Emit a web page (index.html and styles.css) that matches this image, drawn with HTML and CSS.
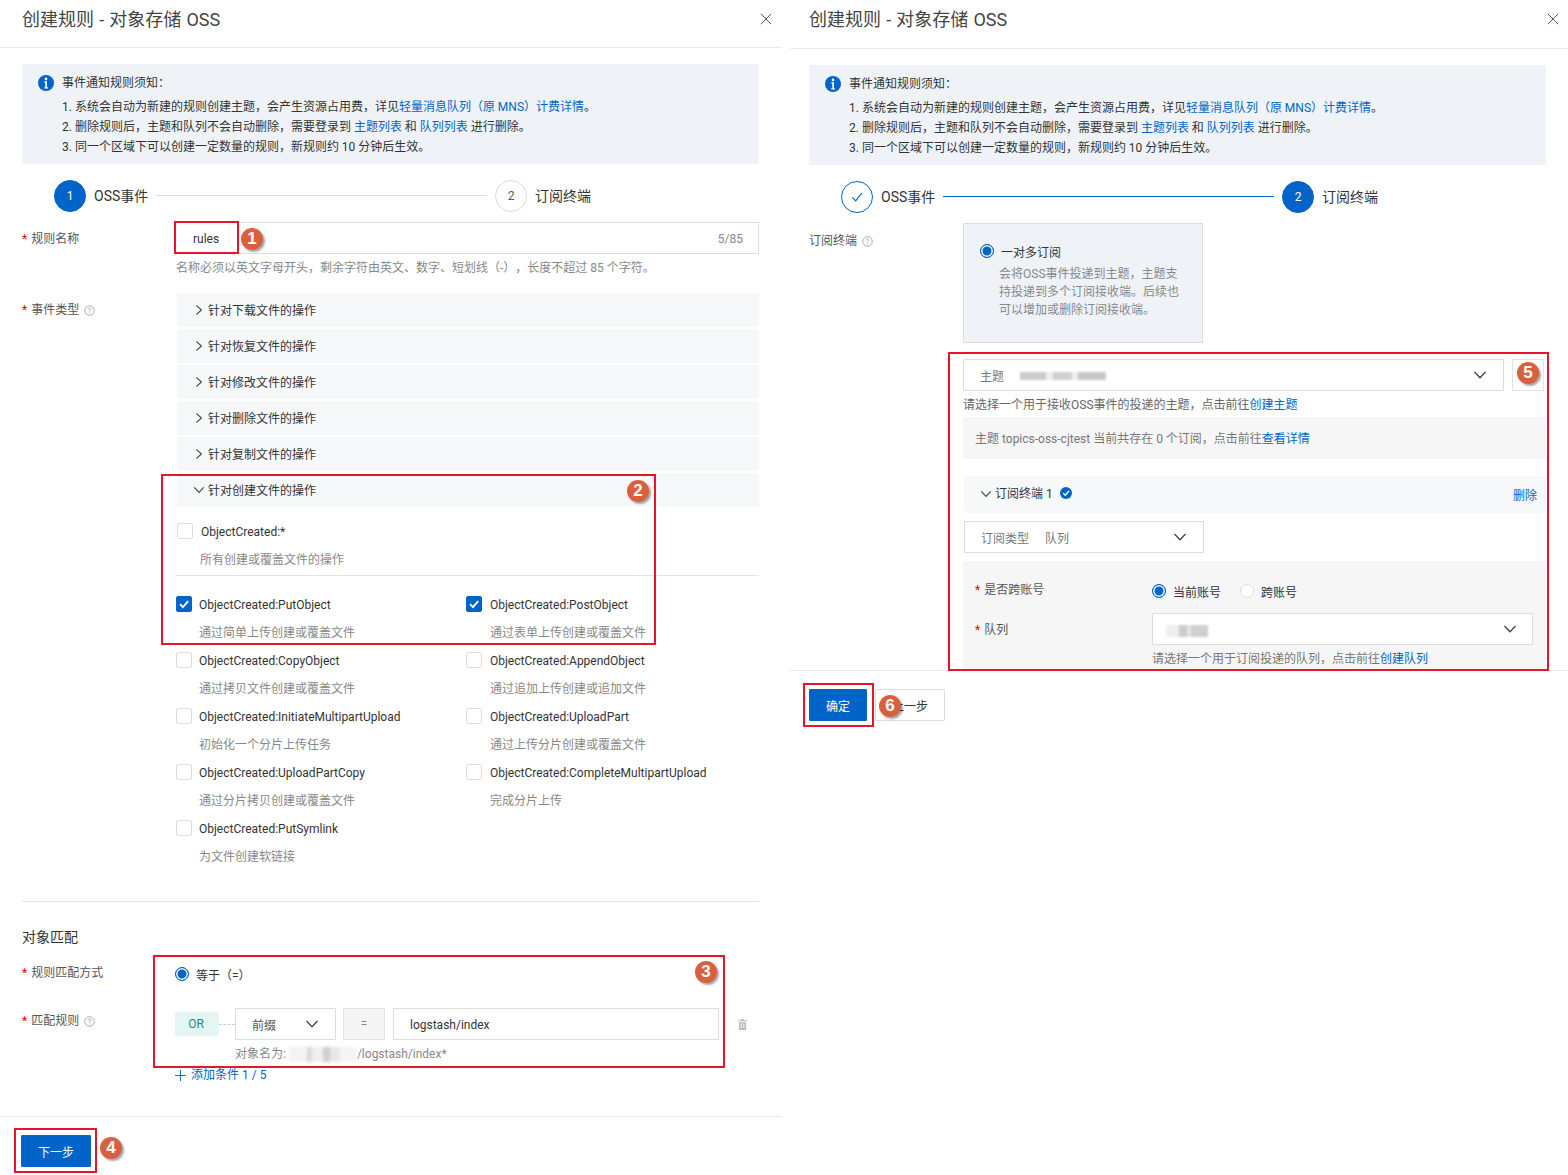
FILE: index.html
```html
<!DOCTYPE html>
<html lang="zh-CN">
<head>
<meta charset="utf-8">
<title>创建规则 - 对象存储 OSS</title>
<link rel="stylesheet" href="styles.css">
</head>
<body>
<svg class="sprite" aria-hidden="true">
  <symbol id="chev-down" viewBox="0 0 14 14"><path d="M1.500 4 7 9.800 12.500 4" fill="none" stroke="currentColor" stroke-width="1.300"/></symbol>
  <symbol id="chev-right" viewBox="0 0 14 14"><path d="M4 1.500 9.800 7 4 12.500" fill="none" stroke="currentColor" stroke-width="1.300"/></symbol>
  <symbol id="help" viewBox="0 0 12 12"><circle cx="6" cy="6" r="5.200" fill="none" stroke="currentColor" stroke-width=".9"/><path d="M4.500 4.800c0-2 3-2 3-.2 0 1.200-1.500 1.100-1.500 2.500M6 8.200v1" fill="none" stroke="currentColor" stroke-width=".9"/></symbol>
  <symbol id="info" viewBox="0 0 16 16"><circle cx="8" cy="8" r="8" fill="#0064c8"/><circle cx="8" cy="3.900" r="1.300" fill="#fff"/><path d="M6.300 6.300h2.700v6h1v1.200H6.300v-1.200h1V7.500h-1z" fill="#fff"/></symbol>
  <symbol id="close" viewBox="0 0 12 12"><path d="M.8.800l10.400 10.400M11.200.800.800 11.200" fill="none" stroke="currentColor" stroke-width="1"/></symbol>
  <symbol id="tick" viewBox="0 0 16 16"><path d="M3.500 8.200 6.800 11.500 12.800 4.800" fill="none" stroke="currentColor" stroke-width="2.100"/></symbol>
  <symbol id="thin-tick" viewBox="0 0 16 16"><path d="M2.500 8.500 6.500 12.500 13.500 3.500" fill="none" stroke="currentColor" stroke-width="1.300"/></symbol>
  <symbol id="trash" viewBox="0 0 10 12"><path d="M3.500 0h3v1.200H10v1.300H0V1.200h3.500zM1 3.500h8V12H1zM3 5v5h1V5zm3 0v5h1V5z" fill="currentColor"/></symbol>
  <symbol id="plus" viewBox="0 0 12 12"><path d="M6 0v12M0 6h12" fill="none" stroke="currentColor" stroke-width="1"/></symbol>
</svg>

<main class="page">
  <section class="panel panel-left">
    <header class="panel-head">
      <h1 class="panel-title">创建规则 - 对象存储 OSS</h1>
      <svg class="close-icon"><use href="#close"/></svg>
    </header>
    <div class="panel-body">
      <div class="notice">
        <div class="notice-title"><svg class="info-icon"><use href="#info"/></svg>事件通知规则须知：</div>
        <p>1. 系统会自动为新建的规则创建主题，会产生资源占用费，详见<a>轻量消息队列（原 MNS）计费详情</a>。</p>
        <p>2. 删除规则后，主题和队列不会自动删除，需要登录到 <a>主题列表</a> 和 <a>队列列表</a> 进行删除。</p>
        <p>3. 同一个区域下可以创建一定数量的规则，新规则约 10 分钟后生效。</p>
      </div>

      <div class="steps">
        <span class="step-dot step-dot-on">1</span><span class="step-name">OSS事件</span>
        <span class="step-line"></span>
        <span class="step-dot">2</span><span class="step-name">订阅终端</span>
      </div>

      <div class="form-row row-name">
        <label class="form-label"><i>*</i>规则名称</label>
        <div class="form-field">
          <div class="text-input name-input"><span class="input-value">rules</span><span class="counter">5/85</span></div>
          <div class="hint hint-name">名称必须以英文字母开头，剩余字符由英文、数字、短划线（-），长度不超过 85 个字符。</div>
        </div>
      </div>

      <div class="form-row row-events">
        <label class="form-label label-events"><i>*</i>事件类型 <svg class="help-icon"><use href="#help"/></svg></label>
        <div class="form-field">
          <div class="acc"><svg class="acc-icon"><use href="#chev-right"/></svg>针对下载文件的操作</div>
          <div class="acc"><svg class="acc-icon"><use href="#chev-right"/></svg>针对恢复文件的操作</div>
          <div class="acc"><svg class="acc-icon"><use href="#chev-right"/></svg>针对修改文件的操作</div>
          <div class="acc"><svg class="acc-icon"><use href="#chev-right"/></svg>针对删除文件的操作</div>
          <div class="acc"><svg class="acc-icon"><use href="#chev-right"/></svg>针对复制文件的操作</div>
          <div class="acc"><svg class="acc-icon"><use href="#chev-down"/></svg>针对创建文件的操作</div>
          <div class="check-item check-all">
            <div class="check-line"><span class="check"></span>ObjectCreated:*</div>
            <div class="check-desc">所有创建或覆盖文件的操作</div>
          </div>
          <div class="events-divider"></div>
          <div class="check-grid">
            <div class="check-item"><div class="check-line"><span class="check check-on"><svg><use href="#tick"/></svg></span>ObjectCreated:PutObject</div><div class="check-desc">通过简单上传创建或覆盖文件</div></div>
            <div class="check-item"><div class="check-line"><span class="check check-on"><svg><use href="#tick"/></svg></span>ObjectCreated:PostObject</div><div class="check-desc">通过表单上传创建或覆盖文件</div></div>
            <div class="check-item"><div class="check-line"><span class="check"></span>ObjectCreated:CopyObject</div><div class="check-desc">通过拷贝文件创建或覆盖文件</div></div>
            <div class="check-item"><div class="check-line"><span class="check"></span>ObjectCreated:AppendObject</div><div class="check-desc">通过追加上传创建或追加文件</div></div>
            <div class="check-item"><div class="check-line"><span class="check"></span>ObjectCreated:InitiateMultipartUpload</div><div class="check-desc">初始化一个分片上传任务</div></div>
            <div class="check-item"><div class="check-line"><span class="check"></span>ObjectCreated:UploadPart</div><div class="check-desc">通过上传分片创建或覆盖文件</div></div>
            <div class="check-item"><div class="check-line"><span class="check"></span>ObjectCreated:UploadPartCopy</div><div class="check-desc">通过分片拷贝创建或覆盖文件</div></div>
            <div class="check-item"><div class="check-line"><span class="check"></span>ObjectCreated:CompleteMultipartUpload</div><div class="check-desc">完成分片上传</div></div>
            <div class="check-item"><div class="check-line"><span class="check"></span>ObjectCreated:PutSymlink</div><div class="check-desc">为文件创建软链接</div></div>
          </div>
        </div>
      </div>

      <div class="section-divider"></div>
      <h2 class="section-title">对象匹配</h2>

      <div class="form-row row-match-mode">
        <label class="form-label"><i>*</i>规则匹配方式</label>
        <div class="form-field radio-line"><span class="radio radio-on"></span>等于（=）</div>
      </div>
      <div class="form-row row-match-rule">
        <label class="form-label label-rule"><i>*</i>匹配规则 <svg class="help-icon"><use href="#help"/></svg></label>
        <div class="form-field">
          <div class="rule-line">
            <span class="or-tag">OR</span>
            <span class="dash"></span>
            <div class="select prefix-select"><span>前缀</span><svg class="select-icon"><use href="#chev-down"/></svg></div>
            <span class="eq-box">=</span>
            <div class="text-input rule-input">logstash/index</div>
            <svg class="trash-icon"><use href="#trash"/></svg>
          </div>
          <div class="object-name">对象名为:<span class="blur blur-object"></span>/logstash/index*</div>
          <div class="add-cond"><svg class="plus-icon"><use href="#plus"/></svg>添加条件 1 / 5</div>
        </div>
      </div>
    </div>
    <footer class="panel-foot">
      <button class="btn btn-primary btn-next">下一步</button>
    </footer>

    <span class="mark mark-1"></span><span class="num num-1">1</span>
    <span class="mark mark-2"></span><span class="num num-2">2</span>
    <span class="mark mark-3"></span><span class="num num-3">3</span>
    <span class="mark mark-4"></span><span class="num num-4">4</span>
  </section>

  <section class="panel panel-right">
    <header class="panel-head">
      <h1 class="panel-title">创建规则 - 对象存储 OSS</h1>
      <svg class="close-icon"><use href="#close"/></svg>
    </header>
    <div class="panel-body">
      <div class="notice">
        <div class="notice-title"><svg class="info-icon"><use href="#info"/></svg>事件通知规则须知：</div>
        <p>1. 系统会自动为新建的规则创建主题，会产生资源占用费，详见<a>轻量消息队列（原 MNS）计费详情</a>。</p>
        <p>2. 删除规则后，主题和队列不会自动删除，需要登录到 <a>主题列表</a> 和 <a>队列列表</a> 进行删除。</p>
        <p>3. 同一个区域下可以创建一定数量的规则，新规则约 10 分钟后生效。</p>
      </div>

      <div class="steps">
        <span class="step-dot step-dot-done"><svg><use href="#thin-tick"/></svg></span><span class="step-name">OSS事件</span>
        <span class="step-line step-line-on"></span>
        <span class="step-dot step-dot-on">2</span><span class="step-name">订阅终端</span>
      </div>

      <div class="form-row row-name">
        <label class="form-label label-sub">订阅终端 <svg class="help-icon"><use href="#help"/></svg></label>
        <div class="form-field">
          <div class="sub-card">
            <div class="sub-card-title"><span class="radio radio-on"></span>一对多订阅</div>
            <p>会将OSS事件投递到主题，主题支持投递到多个订阅接收端。后续也可以增加或删除订阅接收端。</p>
          </div>

          <div class="topic-line">
            <div class="select topic-select"><span class="select-key">主题</span><span class="blur blur-topic"></span><svg class="select-icon"><use href="#chev-down"/></svg></div>
            <span class="refresh-box"></span>
          </div>
          <div class="hint hint-topic">请选择一个用于接收OSS事件的投递的主题，点击前往<a>创建主题</a></div>
          <div class="topic-info">主题 topics-oss-cjtest 当前共存在 0 个订阅，点击前往<a>查看详情</a></div>

          <div class="endpoint-bar">
            <svg class="acc-icon"><use href="#chev-down"/></svg>订阅终端 1
            <span class="ok-badge"><svg><use href="#tick"/></svg></span>
            <a class="delete-link">删除</a>
          </div>
          <div class="select type-select"><span class="select-key">订阅类型</span><span class="select-val">队列</span><svg class="select-icon"><use href="#chev-down"/></svg></div>
          <div class="endpoint-box">
            <div class="inner-row inner-account">
              <label class="inner-label"><i>*</i>是否跨账号</label>
              <div class="radio-line"><span class="radio radio-on"></span><span class="radio-text">当前账号</span><span class="radio"></span><span>跨账号</span></div>
            </div>
            <div class="inner-row inner-queue">
              <label class="inner-label"><i>*</i>队列</label>
              <div class="inner-field">
                <div class="select queue-select"><span class="blur blur-queue"></span><svg class="select-icon"><use href="#chev-down"/></svg></div>
                <div class="hint hint-queue">请选择一个用于订阅投递的队列，点击前往<a>创建队列</a></div>
              </div>
            </div>
          </div>
        </div>
      </div>
    </div>
    <footer class="panel-foot foot-right">
      <button class="btn btn-primary btn-ok">确定</button>
      <button class="btn btn-plain">上一步</button>
    </footer>

    <span class="mark mark-5"></span><span class="num num-5">5</span>
    <span class="mark mark-6"></span><span class="num num-6">6</span>
  </section>
</main>
</body>
</html>
```
FILE: styles.css
```css
* { box-sizing: border-box; }
html, body { margin: 0; padding: 0; background: #fff; }
body {
  font-family: Roboto, "Noto Sans CJK SC", sans-serif;
  font-size: 12px;
  color: #333;
  text-spacing-trim: space-all;
}
.sprite { display: none; }
a { color: #0064c8; }
i { font-style: normal; color: #e00; margin-right: 4px; }
p { margin: 0; }

.page { display: flex; gap: 8px; width: 1568px; height: 1175px; overflow: hidden; }
.panel { position: relative; flex: none; }
.panel-left { width: 782px; height: 1175px; }
.panel-right { width: 778px; height: 1175px; }

.panel-head {
  display: flex; align-items: center; justify-content: space-between;
  height: 48px; border-bottom: 1px solid #eaeaea; padding: 0 10px 8px 22px;
}
.panel-right .panel-head { height: 49px; padding: 0 9px 8px 19px; }
.panel-title { margin: 0; font-size: 18px; font-weight: 400; color: #444; line-height: 24px; word-spacing: .7px; }
.close-icon { width: 12px; height: 12px; color: #555; margin-top: -2px; }

.panel-body { padding: 16px 23px 0 22px; height: 1068px; }
.panel-right .panel-body { padding: 16px 22px 0 19px; height: 621px; overflow: hidden; }

.notice {
  height: 100px; background: #eff3f8; border-radius: 2px; padding: 9px 16px;
  line-height: 20px; color: #333;
}
.notice p { padding-left: 24px; }
.notice-title { display: flex; align-items: center; height: 20px; margin-bottom: 4px; }
.info-icon { width: 16px; height: 16px; margin-right: 8px; }

.steps { display: flex; align-items: center; height: 32px; margin: 16px 168px 0 32px; }
.step-dot {
  flex: none; display: flex; align-items: center; justify-content: center;
  width: 32px; height: 32px; border-radius: 50%; border: 1px solid #ddd; background: #fff; color: #555;
}
.step-dot-on { background: #0064c8; border-color: #0064c8; color: #fff; }
.step-dot-done { border-color: #0064c8; color: #0064c8; }
.step-dot-done svg { width: 14px; height: 14px; }
.step-name { flex: none; margin: -3px 8px 0; font-size: 14px; color: #333; }
.step-line { flex: 1; height: 1px; background: #ddd; margin-top: -2px; }
.step-line-on { background: #0064c8; }
.steps .step-name:last-child { margin-right: 0; }
.steps .step-line + .step-dot { margin-left: 8px; }

.form-row { display: flex; }
.form-label { flex: none; width: 153px; color: #555; line-height: 20px; }
.panel-right .form-label { width: 154px; }
.form-field { flex: 1; min-width: 0; }
.help-icon { width: 11px; height: 11px; color: #999; vertical-align: -2px; margin-left: 2px; }

.row-name { margin-top: 10px; }
.row-name > .form-label { padding-top: 7px; }
.text-input { border: 1px solid #ddd; background: #fff; height: 32px; display: flex; align-items: center; padding-top: 2px; }
.name-input { justify-content: space-between; padding: 2px 15px 0 17px; }
.counter { color: #888; }
.hint { color: #888; line-height: 20px; }
.hint-name { margin-top: 4px; padding-left: 1px; }

.row-events { margin-top: 15px; }
.row-events .form-field { padding-left: 2px; }
.label-events { padding-top: 7px; }
.acc {
  display: flex; align-items: center; height: 34px; margin-bottom: 2px;
  background: #f7f8fa; border-radius: 2px; padding: 0 0 2px 16px; color: #333;
}
.acc-icon { flex: none; width: 12px; height: 12px; margin: 2px 3px 0 0; color: #444; }

.check-item { height: 56px; }
.check-all { margin-top: 10px; }
.check-line { display: flex; align-items: center; height: 28px; padding-top: 2px; }
.check {
  flex: none; display: flex; align-items: center; justify-content: center;
  width: 16px; height: 16px; margin: -2px 7px 0 -1px; border: 1px solid #ddd; border-radius: 2px; background: #fff; color: #fff;
}
.check-all .check { margin-right: 8px; margin-left: 0; }
.check-all .check-desc { padding-left: 23px; }
.check-on { background: #0064c8; border-color: #0064c8; }
.check-on svg { width: 14px; height: 14px; }
.check-desc { padding-left: 22px; line-height: 30px; color: #888; }
.events-divider { height: 1px; background: #e3e3e3; margin: 2px 0 14px -1px; }
.check-grid { display: grid; grid-template-columns: 290px 1fr; margin-left: 0; }
.check-grid .check-item:nth-child(even) .check { margin-right: 8px; }
.check-grid .check-item:nth-child(even) .check-desc { padding-left: 23px; }

.section-divider { height: 1px; background: #e3e3e3; margin-top: 31px; }
.section-title { margin: 25px 0 0; font-size: 14px; font-weight: 400; line-height: 20px; color: #333; }

.row-match-mode { margin-top: 15px; align-items: flex-start; }
.row-match-mode .form-label { line-height: 22px; }
.radio-line { display: flex; align-items: center; height: 24px; }
.radio {
  flex: none; display: inline-block; width: 14px; height: 14px; margin-right: 7px; border-radius: 50%;
  border: 1px solid #ddd; background: #fff;
}
.radio-on { border: 1.500px solid #0064c8; box-shadow: inset 0 0 0 1.500px #fff; background: #0064c8; }

.row-match-rule { margin-top: 22px; }
.label-rule { padding-top: 3px; }
.rule-line { display: flex; align-items: center; height: 32px; }
.or-tag {
  flex: none; display: flex; align-items: center; justify-content: center; width: 44px; height: 24px;
  background: #e3f6f3; color: #13908a; border-radius: 2px; padding-right: 2px;
}
.dash { flex: none; width: 16px; border-top: 1px dashed #ccc; }
.select { display: flex; align-items: center; height: 32px; border: 1px solid #ddd; background: #fff; border-radius: 1px; position: relative; }
.select-icon { width: 14px; height: 14px; color: #444; margin-left: auto; }
.prefix-select { flex: none; width: 101px; padding: 0 16px; color: #555; }
.eq-box {
  flex: none; display: flex; align-items: center; justify-content: center;
  width: 42px; height: 32px; margin: 0 8px 0 7px; background: #f5f5f5; border: 1px solid #e3e3e3; color: #888;
}
.rule-input { flex: none; width: 326px; padding: 2px 16px 0; }
.trash-icon { flex: none; width: 9px; height: 11px; margin-left: 19px; color: #bbb; }
.object-name { padding-left: 60px; margin-top: 4px; line-height: 20px; color: #888; display: flex; align-items: center; }
.blur { display: inline-block; filter: blur(1.500px); }
.blur-object {
  width: 68px; height: 15px; margin-left: 3px;
  background: linear-gradient(90deg, #f3f3f3 0 26%, #d8d8d8 26% 34%, #efefef 34% 50%, #cfcfcf 50% 60%, #e8e8e8 60% 75%, #f5f5f5 75%);
}
.add-cond { display: flex; align-items: center; margin-top: 1px; line-height: 20px; color: #0064c8; }
.plus-icon { flex: none; width: 11px; height: 11px; margin-right: 5px; }

.panel-foot { border-top: 1px solid #eaeaea; padding: 18px 21px; display: flex; gap: 8px; }
.foot-right { padding-left: 19px; }
.btn {
  font: inherit; height: 32px; border-radius: 1px; border: 1px solid #ddd; background: #fff; color: #333; padding: 0;
}
.btn-primary { background: #0064c8; border-color: #0064c8; color: #fff; }
.btn-next { width: 70px; }
.btn-ok { width: 58px; }
.btn-plain { width: 70px; }

.panel-right .label-sub { padding-top: 8px; color: #555; }
.sub-card { width: 240px; height: 120px; background: #eff3f8; border: 1px solid #ddd; padding: 17px 20px 0 16px; }
.sub-card-title { display: flex; align-items: center; height: 20px; }
.sub-card-title .radio { margin-right: 7px; }
.sub-card p { line-height: 18px; margin: 4px 0 0 19px; color: #888; }

.topic-line { display: flex; gap: 8px; margin-top: 16px; padding-right: 2px; }
.topic-select { flex: 1; padding: 0 16px; }
.select-key { color: #777; }
.blur-topic {
  width: 86px; height: 8px; margin: 2px 0 0 16px;
  background: linear-gradient(90deg, #ccc 0 30%, #eee 30% 38%, #d0d0d0 38% 60%, #eee 60% 68%, #c8c8c8 68%);
  filter: blur(1px);
}
.refresh-box { flex: none; width: 32px; height: 32px; border: 1px solid #e3e3e3; background: #fff; }
.hint-topic { margin-top: 4px; color: #666; }
.topic-info {
  display: flex; align-items: center; margin-top: 2px; height: 42px; padding: 0 0 2px 12px;
  background: #f6f6f6; border-radius: 2px; color: #777;
}
.endpoint-bar {
  display: flex; align-items: center; height: 37px; margin: 17px 0 0 1px; padding: 0 9px 4px 16px;
  background: #f7f8fa; border-radius: 2px;
}
.ok-badge {
  display: flex; align-items: center; justify-content: center; width: 12px; height: 12px; margin-left: 7px;
  border-radius: 50%; background: #0064c8; color: #fff;
}
.ok-badge svg { width: 10px; height: 10px; }
.delete-link { margin: 4px 0 0 auto; }
.type-select { width: 240px; margin: 8px 0 0 1px; padding: 0 16px; }
.select-val { margin-left: 16px; color: #777; }
.endpoint-box { margin: 8px 0 0; padding: 18px 13px 0 12px; background: #f6f6f6; border-radius: 2px; height: 120px; }
.inner-row { display: flex; }
.inner-label { flex: none; width: 177px; line-height: 22px; color: #555; }
.inner-account .radio-line { height: 24px; }
.radio-text { margin-right: 19px; }
.inner-queue { margin-top: 10px; }
.inner-queue .inner-label { padding-top: 6px; }
.inner-field { flex: 1; }
.queue-select { padding: 0 15px 0 13px; }
.blur-queue {
  width: 42px; height: 12px; margin-top: 3px;
  background: linear-gradient(90deg, #eee 0 30%, #ccc 30% 50%, #e5e5e5 50% 60%, #cfcfcf 60%);
  filter: blur(.8px);
}
.hint-queue { margin-top: 4px; color: #777; }

.mark { position: absolute; border: 2px solid #e8142a; pointer-events: none; }
.num {
  position: absolute; width: 22px; height: 22px; border-radius: 50%;
  background: #d9603f; color: #fff; font-size: 17px; font-weight: 700; line-height: 22px; text-align: center;
  box-shadow: 2px 2px 2px rgba(0, 0, 0, .35); font-family: "Liberation Sans", sans-serif;
}
.mark-1 { left: 174px; top: 221px; width: 65px; height: 33px; }
.num-1 { left: 241px; top: 228px; }
.mark-2 { left: 161px; top: 474px; width: 495px; height: 171px; }
.num-2 { left: 627px; top: 480px; }
.mark-3 { left: 153px; top: 955px; width: 572px; height: 113px; }
.num-3 { left: 695px; top: 961px; }
.mark-4 { left: 14px; top: 1128px; width: 83px; height: 45px; }
.num-4 { left: 100px; top: 1137px; }
.mark-5 { left: 158px; top: 352px; width: 601px; height: 319px; }
.num-5 { left: 727px; top: 362px; }
.mark-6 { left: 13px; top: 683px; width: 71px; height: 44px; }
.num-6 { left: 89px; top: 695px; }
```
